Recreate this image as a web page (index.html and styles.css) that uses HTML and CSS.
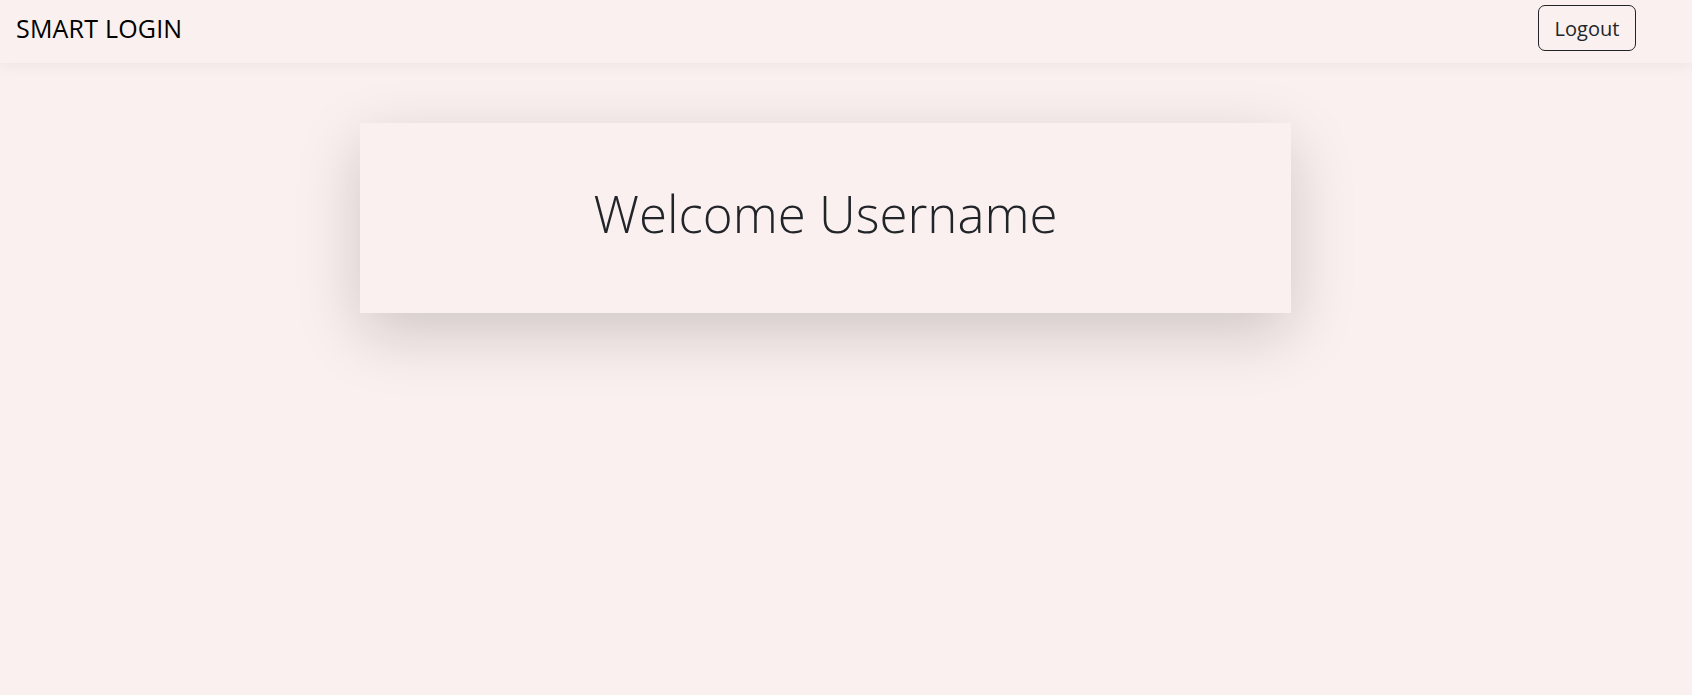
FILE: index.html
```html
<!DOCTYPE html>
<html lang="en">
<head>
<meta charset="utf-8">
<title>Smart Login</title>
<link rel="stylesheet" href="styles.css">
</head>
<body>
<nav class="navbar">
  <span class="brand">SMART LOGIN</span>
  <button class="btn-logout" type="button">Logout</button>
</nav>
<main class="main">
  <section class="card">
    <h1 class="welcome">Welcome Username</h1>
  </section>
</main>
</body>
</html>
```

FILE: styles.css
```css
* { box-sizing: border-box; }
html, body { margin: 0; padding: 0; }
body {
  background: #faf0ef;
  font-family: "Open Sans", "Noto Sans", sans-serif;
  color: #212529;
  height: 695px;
  overflow: hidden;
}
.navbar {
  height: 63px;
  display: flex;
  align-items: center;
  justify-content: space-between;
  padding: 0 56px 0 16px;
  background: #faf0ef;
  box-shadow: 0 3px 14px rgba(0,0,0,0.05);
  position: relative;
  z-index: 1;
}
.brand {
  font-size: 25px;
  color: #000;
  letter-spacing: 0.2px;
  margin-top: -7px;
}
.btn-logout {
  font-family: inherit;
  font-size: 20px;
  color: #212529;
  background: transparent;
  border: 1.25px solid #212529;
  border-radius: 7px;
  height: 46px;
  width: 98px;
  padding: 0;
  margin-top: -7px;
}
.main {
  display: flex;
  padding-top: 60px;
  padding-left: 360px;
}
.card {
  width: 931px;
  height: 190px;
  background: #faf0ef;
  box-shadow: 0 20px 60px rgba(0,0,0,0.175);
  display: flex;
  align-items: center;
  justify-content: center;
}
.welcome {
  margin: 0;
  font-size: 51px;
  font-weight: 350;
  margin-top: -11px;
}
```
